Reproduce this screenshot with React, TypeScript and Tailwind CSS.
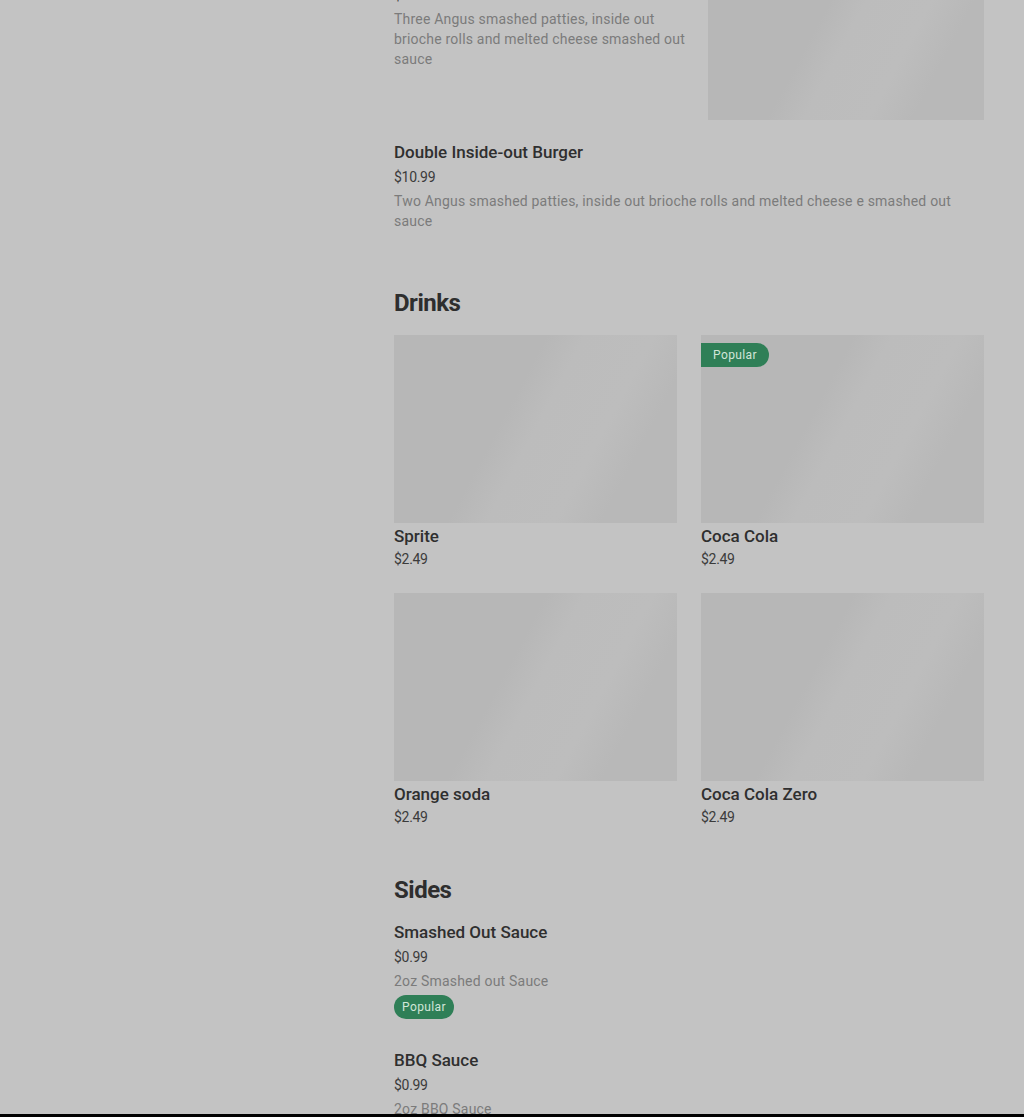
type Drink = { name: string; price: string; popular?: boolean };

const drinks: Drink[] = [
  { name: "Sprite", price: "$2.49" },
  { name: "Coca Cola", price: "$2.49", popular: true },
  { name: "Orange soda", price: "$2.49" },
  { name: "Coca Cola Zero", price: "$2.49" },
];

const shimmer =
  "bg-[linear-gradient(118deg,#b7b7b7_40%,#bcbcbc_50%,#bdbdbd_68%,#b8b8b8_80%)]";

function ItemText({ title, price, desc }: { title: string; price: string; desc: string }) {
  return (
    <div>
      <h3 className="text-[17px] leading-6 font-medium text-[#2f2f2f]">{title}</h3>
      <p className="mt-[3px] text-[14px] leading-5 text-[#3b3b3b] tracking-[-0.3px]">{price}</p>
      <p className="mt-1 text-[14px] leading-5 text-[#7b7b7b] tracking-[0.2px]">{desc}</p>
    </div>
  );
}

export default function App() {
  return (
    <div className="h-[1117px] bg-black font-['Roboto',sans-serif]">
      <div className="h-[1114px] bg-[#c3c3c3] overflow-hidden">
        <main className="ml-[394px] w-[590px] -mt-[42px]">
          {/* burgers, scrolled past the header */}
          <section>
            <div className="flex gap-5">
              <div className="flex-1">
                <ItemText
                  title="Triple Inside-out Burger"
                  price="$12.99"
                  desc="Three Angus smashed patties, inside out brioche rolls and melted cheese smashed out sauce"
                />
              </div>
              <div className={`w-[276px] h-[162px] shrink-0 ${shimmer}`} />
            </div>
            <div className="mt-5">
              <ItemText
                title="Double Inside-out Burger"
                price="$10.99"
                desc="Two Angus smashed patties, inside out brioche rolls and melted cheese e smashed out sauce"
              />
            </div>
          </section>

          <section className="mt-[56px]">
            <h2 className="text-2xl leading-8 font-bold text-[#2e2e2e] tracking-[-0.5px]">Drinks</h2>
            <div className="mt-4 grid grid-cols-2 gap-6">
              {drinks.map((d) => (
                <div key={d.name}>
                  <div className={`relative h-[188px] ${shimmer}`}>
                    {d.popular && (
                      <span className="absolute left-0 top-2 h-6 flex items-center pl-3 pr-3 rounded-r-full bg-[#2f7f57] text-[12px] tracking-[0.4px] text-[#d2e6d9]">
                        Popular
                      </span>
                    )}
                  </div>
                  <h3 className="mt-px text-[17px] leading-6 font-medium text-[#2f2f2f]">{d.name}</h3>
                  <p className="mt-px text-[14px] leading-5 text-[#3b3b3b] tracking-[-0.3px]">{d.price}</p>
                </div>
              ))}
            </div>
          </section>

          <section className="mt-[47px]">
            <h2 className="text-2xl leading-8 font-bold text-[#2e2e2e] tracking-[-0.5px]">Sides</h2>
            <div className="mt-[14px]">
              <ItemText title="Smashed Out Sauce" price="$0.99" desc="2oz Smashed out Sauce" />
              <span className="mt-1 inline-flex h-6 items-center px-2 rounded-full bg-[#2f7f57] text-[12px] tracking-[0.4px] text-[#d2e6d9]">
                Popular
              </span>
            </div>
            <div className="mt-[29px]">
              <ItemText title="BBQ Sauce" price="$0.99" desc="2oz BBQ Sauce" />
            </div>
          </section>
        </main>
      </div>
    </div>
  );
}
